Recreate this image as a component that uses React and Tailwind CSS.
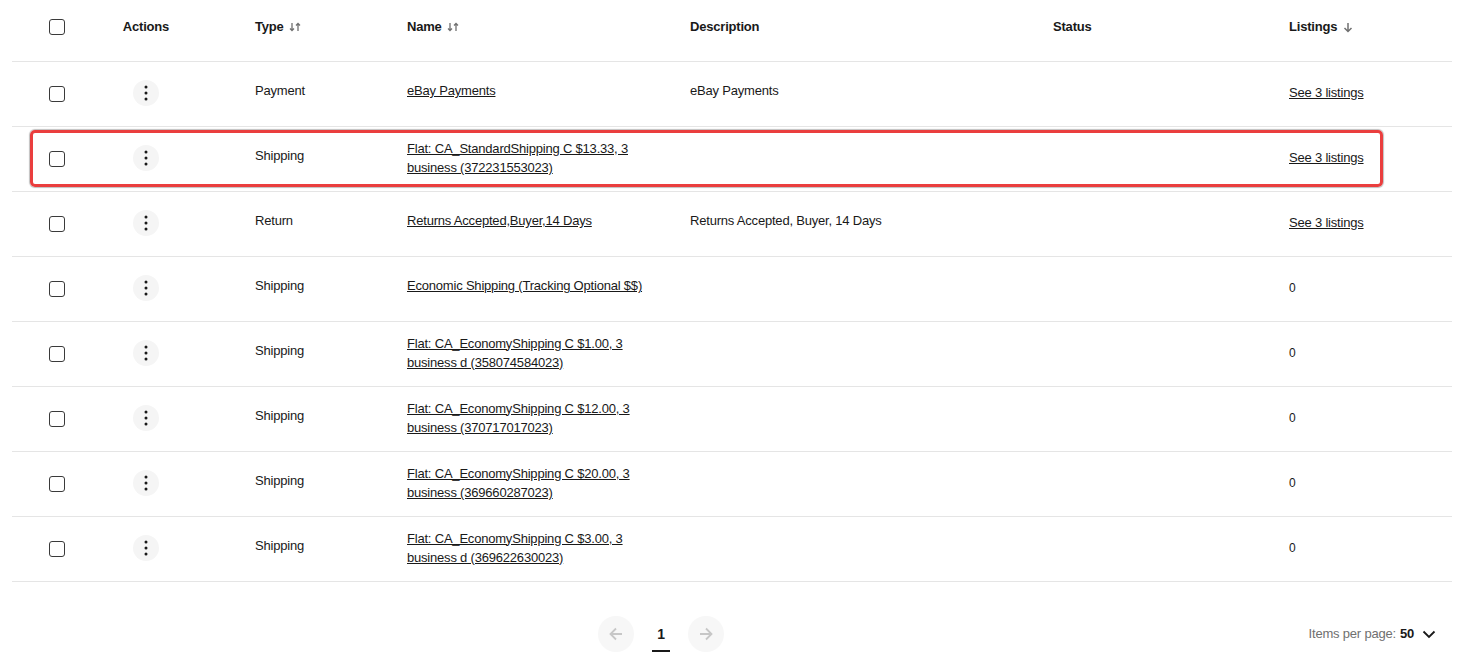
import React from 'react';

const rows = [
  { type: 'Payment', name: 'eBay Payments', description: 'eBay Payments', listings: 'See 3 listings' },
  { type: 'Shipping', name: 'Flat: CA_StandardShipping C $13.33, 3 business (372231553023)', description: '', listings: 'See 3 listings', wrap: true },
  { type: 'Return', name: 'Returns Accepted,Buyer,14 Days', description: 'Returns Accepted, Buyer, 14 Days', listings: 'See 3 listings' },
  { type: 'Shipping', name: 'Economic Shipping (Tracking Optional $$)', description: '', listings: '0' },
  { type: 'Shipping', name: 'Flat: CA_EconomyShipping C $1.00, 3 business d (358074584023)', description: '', listings: '0', wrap: true },
  { type: 'Shipping', name: 'Flat: CA_EconomyShipping C $12.00, 3 business (370717017023)', description: '', listings: '0', wrap: true },
  { type: 'Shipping', name: 'Flat: CA_EconomyShipping C $20.00, 3 business (369660287023)', description: '', listings: '0', wrap: true },
  { type: 'Shipping', name: 'Flat: CA_EconomyShipping C $3.00, 3 business d (369622630023)', description: '', listings: '0', wrap: true },
];

const cols = 'grid grid-cols-[90px_88px_217px_283px_363px_236px_163px] items-center';

const SortIcon = () => (
  <svg width="12" height="10" viewBox="0 0 12 10" className="inline-block ml-[5px] text-[#707070]" fill="none" stroke="currentColor" strokeWidth="1.3">
    <path d="M3 1v7.5M1 6.5l2 2 2-2" />
    <path d="M9 9V1.5M7 3.5l2-2 2 2" />
  </svg>
);

const DownIcon = () => (
  <svg width="10" height="11" viewBox="0 0 10 11" className="inline-block ml-[6px] text-[#707070]" fill="none" stroke="currentColor" strokeWidth="1.5">
    <path d="M5 1v8.5M1.5 6l3.5 3.5L8.5 6" />
  </svg>
);

const Checkbox = () => (
  <input
    type="checkbox"
    className="appearance-none w-4 h-4 border-[1.5px] border-[#3a3a3a] rounded-[3px] bg-white block"
  />
);

const DotsButton = () => (
  <button className="w-[26px] h-[26px] rounded-full bg-[#f5f5f5] flex items-center justify-center">
    <svg width="4" height="16" viewBox="0 0 4 16" fill="#191919">
      <circle cx="2" cy="2" r="1.5" />
      <circle cx="2" cy="8" r="1.5" />
      <circle cx="2" cy="14" r="1.5" />
    </svg>
  </button>
);

export default function App() {
  return (
    <div className="bg-white min-h-screen text-[13px] tracking-[-0.2px] text-[#191919] font-['Liberation_Sans',Arial,sans-serif]">
      <div className="relative w-[1440px] ml-[12px]">
        {/* header */}
        <div className={`${cols} h-[62px] border-b border-[#e5e5e5] font-bold`}>
          <div className="flex justify-center pb-[7px]"><Checkbox /></div>
          <div className="text-center pb-[7px]">Actions</div>
          <div className="pl-[65px] pb-[7px] flex items-center">Type<SortIcon /></div>
          <div className="pb-[7px] flex items-center">Name<SortIcon /></div>
          <div className="pb-[7px]">Description</div>
          <div className="pb-[7px]">Status</div>
          <div className="pb-[7px] flex items-center">Listings<DownIcon /></div>
        </div>

        {rows.map((r, i) => (
          <div key={i} className={`${cols} h-[65px] border-b border-[#e5e5e5]`}>
            <div className="flex justify-center"><Checkbox /></div>
            <div className="flex justify-center pb-[2px]"><DotsButton /></div>
            <div className="pl-[65px] pb-[7px]">{r.type}</div>
            <div className={r.wrap ? 'pb-[3px]' : 'pb-[7px]'}>
              <a href="#" className="underline leading-[19px] block max-w-[240px]">{r.name}</a>
            </div>
            <div className="pb-[7px]">{r.description}</div>
            <div className="pb-[7px]"></div>
            <div className="pb-[3px]">
              {r.listings === '0' ? (
                <span className="text-[12px]">0</span>
              ) : (
                <a href="#" className="underline">{r.listings}</a>
              )}
            </div>
          </div>
        ))}

        {/* highlight box */}
        <div className="absolute left-[18px] top-[130px] w-[1353px] h-[57px] border-[3px] border-[#ea3e3e] rounded-[5px] shadow-[0_0_1px_1px_rgba(0,0,0,0.25)] pointer-events-none" />

        {/* pagination */}
        <div className="flex items-center h-[88px]">
          <div className="flex items-center ml-[586px] pt-[16px]">
            <button className="w-9 h-9 rounded-full bg-[#f7f7f7] flex items-center justify-center text-[#c7c7c7]">
              <svg width="16" height="16" viewBox="0 0 16 16" fill="none" stroke="currentColor" strokeWidth="1.8">
                <path d="M14 8H2.5M8 2.5L2.5 8 8 13.5" />
              </svg>
            </button>
            <div className="w-[54px] flex justify-center">
              <span className="font-bold text-[14px] w-[18px] text-center border-b-2 border-[#191919] pt-[9px] pb-[7px] leading-[18px]">1</span>
            </div>
            <button className="w-9 h-9 rounded-full bg-[#f7f7f7] flex items-center justify-center text-[#c7c7c7]">
              <svg width="16" height="16" viewBox="0 0 16 16" fill="none" stroke="currentColor" strokeWidth="1.8">
                <path d="M2 8h11.5M8 2.5L13.5 8 8 13.5" />
              </svg>
            </button>
          </div>
          <div className="ml-auto pr-[16px] pt-[16px] flex items-center">
            <span className="text-[#707070]">Items per page:</span>
            <span className="font-bold ml-[4px]">50</span>
            <svg width="14" height="10" viewBox="0 0 14 10" className="ml-[8px]" fill="none" stroke="#191919" strokeWidth="1.8">
              <path d="M1.5 2.5L7 8l5.5-5.5" />
            </svg>
          </div>
        </div>
      </div>
    </div>
  );
}
